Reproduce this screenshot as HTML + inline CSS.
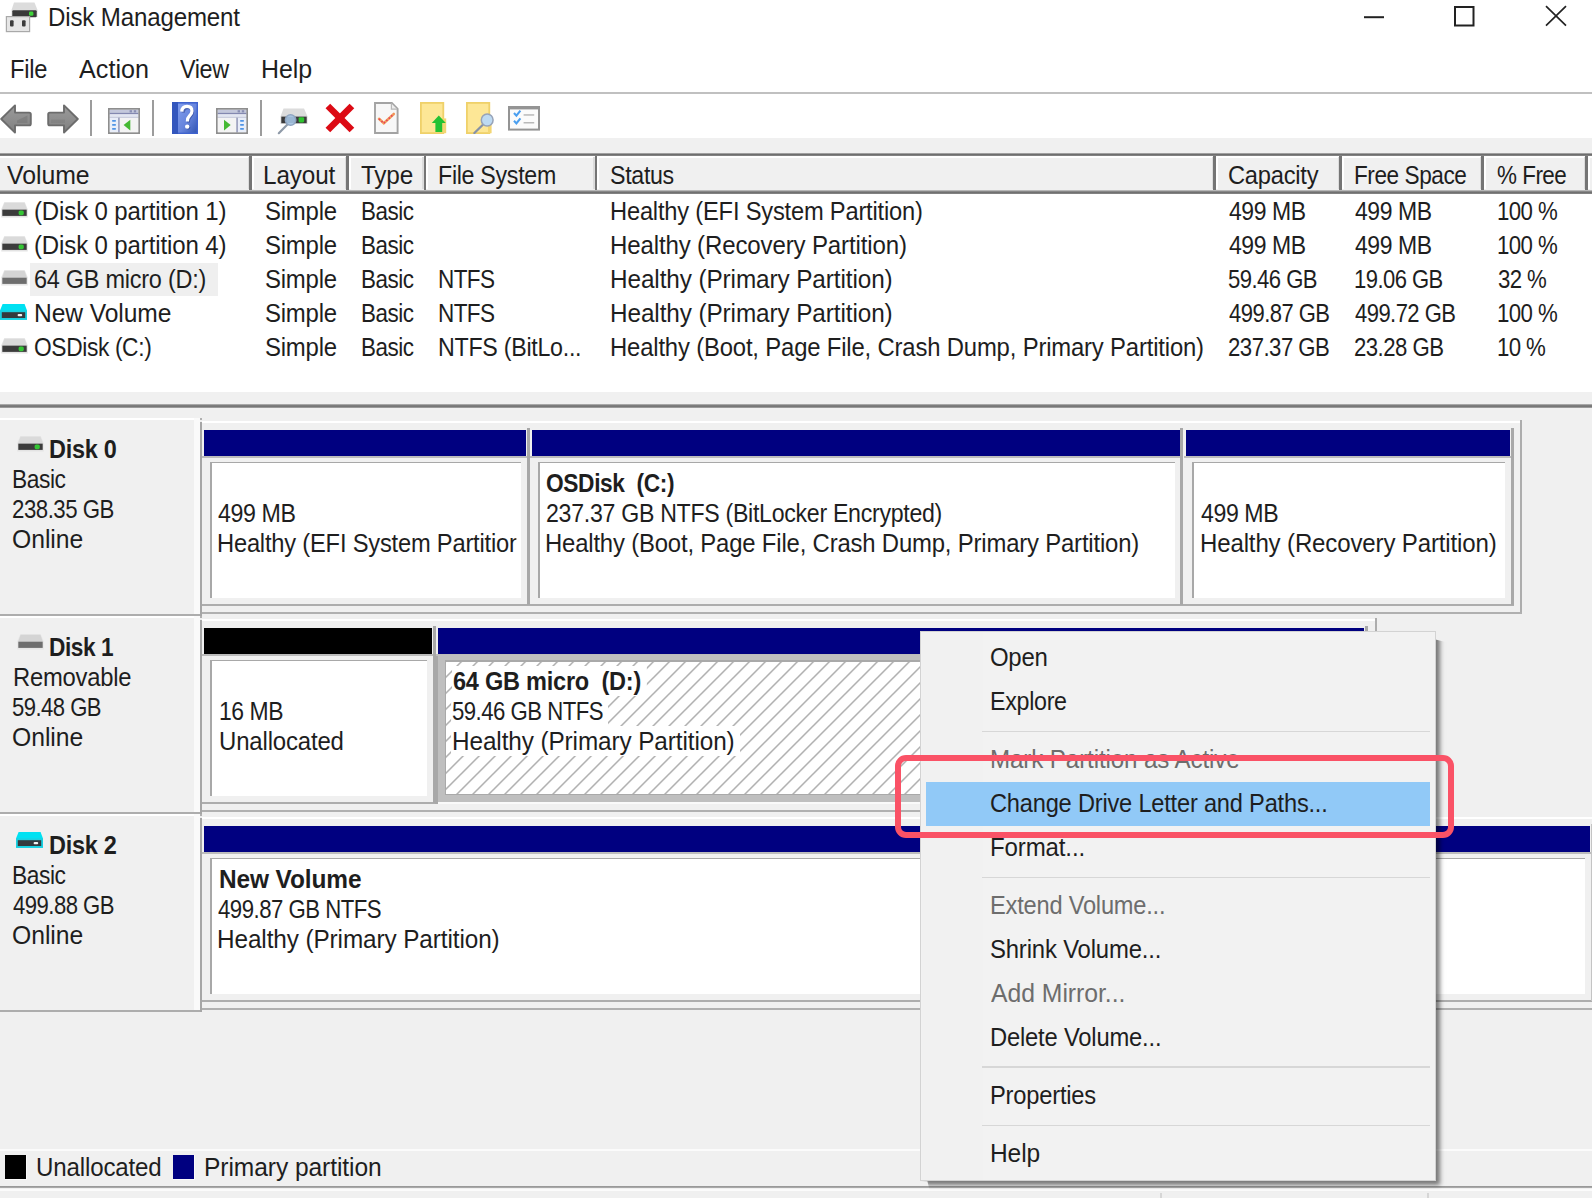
<!DOCTYPE html>
<html lang="en"><head><meta charset="utf-8"><title>Disk Management</title>
<style>
html,body{margin:0;padding:0}
body{width:1592px;height:1198px;overflow:hidden;background:#f0f0f0;position:relative;
 font-family:"Liberation Sans", sans-serif;font-size:25px;color:#1e1e1e;-webkit-font-smoothing:antialiased}
body>div,body>svg{position:absolute;display:block}
.t{white-space:nowrap;line-height:30px;height:30px;transform-origin:0 0}
</style></head>
<body>
<div style="left:0px;top:0px;width:1592px;height:138px;background:#fff;"></div>
<div style="left:0px;top:92px;width:1592px;height:2px;background:#c0c0c0;"></div>
<svg style="left:1355px;top:0;width:237px;height:36px" viewBox="1355 0 237 36"><path d="M1364 17.2H1384" stroke="#222" stroke-width="2" fill="none"/><rect x="1455" y="7" width="18.5" height="18.5" stroke="#222" stroke-width="2" fill="none"/><path d="M1546 6.2L1566 25.6M1566 6.2L1546 25.6" stroke="#222" stroke-width="1.7" fill="none"/></svg>
<div style="left:0px;top:153px;width:1592px;height:40px;background:#f0f0f0;"></div>
<div style="left:0px;top:152.5px;width:1592px;height:3px;background:linear-gradient(#b8b8b8,#6e6e6e 50%,#8a8a8a);"></div>
<div style="left:0px;top:155.5px;width:1592px;height:2px;background:#fff;"></div>
<div style="left:0px;top:189.5px;width:1592px;height:4.5px;background:linear-gradient(#d0d0d0,#8a8a8a 35%,#6e6e6e 65%,#8c8c8c);"></div>
<div style="left:247.5px;top:157px;width:1.5px;height:32px;background:#dcdcdc;"></div>
<div style="left:249px;top:156px;width:2.6px;height:34px;background:#757575;"></div>
<div style="left:251.6px;top:157px;width:2.4px;height:32px;background:#fff;"></div>
<div style="left:344.5px;top:157px;width:1.5px;height:32px;background:#dcdcdc;"></div>
<div style="left:346px;top:156px;width:2.6px;height:34px;background:#757575;"></div>
<div style="left:348.6px;top:157px;width:2.4px;height:32px;background:#fff;"></div>
<div style="left:422.0px;top:157px;width:1.5px;height:32px;background:#dcdcdc;"></div>
<div style="left:423.5px;top:156px;width:2.6px;height:34px;background:#757575;"></div>
<div style="left:426.1px;top:157px;width:2.4px;height:32px;background:#fff;"></div>
<div style="left:593.0px;top:157px;width:1.5px;height:32px;background:#dcdcdc;"></div>
<div style="left:594.5px;top:156px;width:2.6px;height:34px;background:#757575;"></div>
<div style="left:597.1px;top:157px;width:2.4px;height:32px;background:#fff;"></div>
<div style="left:1211.5px;top:157px;width:1.5px;height:32px;background:#dcdcdc;"></div>
<div style="left:1213px;top:156px;width:2.6px;height:34px;background:#757575;"></div>
<div style="left:1215.6px;top:157px;width:2.4px;height:32px;background:#fff;"></div>
<div style="left:1337.5px;top:157px;width:1.5px;height:32px;background:#dcdcdc;"></div>
<div style="left:1339px;top:156px;width:2.6px;height:34px;background:#757575;"></div>
<div style="left:1341.6px;top:157px;width:2.4px;height:32px;background:#fff;"></div>
<div style="left:1479.5px;top:157px;width:1.5px;height:32px;background:#dcdcdc;"></div>
<div style="left:1481px;top:156px;width:2.6px;height:34px;background:#757575;"></div>
<div style="left:1483.6px;top:157px;width:2.4px;height:32px;background:#fff;"></div>
<div style="left:1583.5px;top:157px;width:1.5px;height:32px;background:#dcdcdc;"></div>
<div style="left:1585px;top:156px;width:2.6px;height:34px;background:#757575;"></div>
<div style="left:1587.6px;top:157px;width:2.4px;height:32px;background:#fff;"></div>
<div style="left:0px;top:194px;width:1592px;height:198px;background:#fff;"></div>
<div style="left:30px;top:262.5px;width:187.5px;height:33.5px;background:#efefef;"></div>
<div style="left:0px;top:404px;width:1592px;height:3.5px;background:linear-gradient(#bdbdbd,#707070 45%,#7a7a7a 70%,#b0b0b0);"></div>
<div style="left:0px;top:418px;width:194px;height:2px;background:#fff;"></div>
<div style="left:194px;top:418px;width:6px;height:198px;background:#fafafa;"></div>
<div style="left:0px;top:614px;width:200px;height:2px;background:#adadad;"></div>
<div style="left:200px;top:418px;width:2px;height:2px;background:#b0b0b0;"></div>
<div style="left:200px;top:422px;width:2px;height:194px;background:#a6a6a6;"></div>
<div style="left:202px;top:421px;width:1318px;height:2.4px;background:#fff;"></div>
<div style="left:1520px;top:420px;width:2px;height:194px;background:#adadad;"></div>
<div style="left:202px;top:612px;width:1320px;height:2px;background:#b0b0b0;"></div>
<div style="left:202px;top:604px;width:1312px;height:2px;background:#adadad;"></div>
<div style="left:204px;top:430px;width:322px;height:25.8px;background:#000080;"></div>
<div style="left:526.5px;top:428px;width:3.4px;height:177px;background:#a8a8a8;"></div>
<div style="left:202px;top:456px;width:324.5px;height:1.8px;background:#bcbcbc;"></div>
<div style="left:210px;top:462px;width:311px;height:136px;background:#fff;border-top:1.8px solid #a8a8a8;border-left:2px solid #a8a8a8;box-sizing:border-box;"></div>
<div style="left:532px;top:430px;width:647.5px;height:25.8px;background:#000080;"></div>
<div style="left:1180.0px;top:428px;width:3.4px;height:177px;background:#a8a8a8;"></div>
<div style="left:530px;top:456px;width:650.0px;height:1.8px;background:#bcbcbc;"></div>
<div style="left:538px;top:462px;width:636.5px;height:136px;background:#fff;border-top:1.8px solid #a8a8a8;border-left:2px solid #a8a8a8;box-sizing:border-box;"></div>
<div style="left:1186px;top:430px;width:324px;height:25.8px;background:#000080;"></div>
<div style="left:1510.5px;top:428px;width:3.4px;height:177px;background:#a8a8a8;"></div>
<div style="left:1184px;top:456px;width:326.5px;height:1.8px;background:#bcbcbc;"></div>
<div style="left:1192px;top:462px;width:313px;height:136px;background:#fff;border-top:1.8px solid #a8a8a8;border-left:2px solid #a8a8a8;box-sizing:border-box;"></div>
<div style="left:0px;top:616px;width:194px;height:2px;background:#fff;"></div>
<div style="left:194px;top:616px;width:6px;height:198px;background:#fafafa;"></div>
<div style="left:0px;top:812px;width:200px;height:2px;background:#adadad;"></div>
<div style="left:200px;top:616px;width:2px;height:2px;background:#b0b0b0;"></div>
<div style="left:200px;top:620px;width:2px;height:194px;background:#a6a6a6;"></div>
<div style="left:202px;top:619px;width:1173px;height:2.4px;background:#fff;"></div>
<div style="left:1375px;top:618px;width:2px;height:194px;background:#adadad;"></div>
<div style="left:202px;top:810px;width:1175px;height:2px;background:#b0b0b0;"></div>
<div style="left:202px;top:802px;width:1167px;height:2px;background:#adadad;"></div>
<div style="left:204px;top:628px;width:228px;height:25.8px;background:#000;"></div>
<div style="left:432.5px;top:626px;width:3.4px;height:177px;background:#a8a8a8;"></div>
<div style="left:202px;top:654px;width:230.5px;height:1.8px;background:#bcbcbc;"></div>
<div style="left:210px;top:660px;width:217px;height:136px;background:#fff;border-top:1.8px solid #a8a8a8;border-left:2px solid #a8a8a8;box-sizing:border-box;"></div>
<div style="left:438.2px;top:628px;width:925.8px;height:25.8px;background:#000080;"></div>
<div style="left:1364.5px;top:626px;width:3.4px;height:177px;background:#a8a8a8;"></div>
<div style="left:436.2px;top:654px;width:928.3px;height:1.8px;background:#bcbcbc;"></div>
<div style="left:0px;top:814px;width:194px;height:2px;background:#fff;"></div>
<div style="left:194px;top:814px;width:6px;height:198px;background:#fafafa;"></div>
<div style="left:0px;top:1010px;width:200px;height:2px;background:#adadad;"></div>
<div style="left:200px;top:814px;width:2px;height:2px;background:#b0b0b0;"></div>
<div style="left:200px;top:818px;width:2px;height:194px;background:#a6a6a6;"></div>
<div style="left:202px;top:817px;width:1398px;height:2.4px;background:#fff;"></div>
<div style="left:202px;top:1008px;width:1398px;height:2px;background:#b0b0b0;"></div>
<div style="left:202px;top:1000px;width:1398px;height:2px;background:#adadad;"></div>
<div style="left:204px;top:826px;width:1386px;height:25.8px;background:#000080;"></div>
<div style="left:1590.5px;top:824px;width:3.4px;height:177px;background:#c4c4c4;"></div>
<div style="left:202px;top:852px;width:1388.5px;height:1.8px;background:#bcbcbc;"></div>
<div style="left:210px;top:858px;width:1375px;height:136px;background:#fff;border-top:1.8px solid #a8a8a8;border-left:2px solid #a8a8a8;box-sizing:border-box;"></div>
<div style="left:434.7px;top:655.7px;width:3px;height:148px;background:#a8a8a8;"></div>
<div style="left:437.7px;top:654.5px;width:931px;height:147.1px;background:#bfbfbf;"></div>
<div style="left:437.7px;top:801.6px;width:931px;height:2.6px;background:#fafafa;"></div>
<div style="left:444.7px;top:660.4px;width:920px;height:134.6px;background:#a9a9a9;"></div>
<svg style="left:445.7px;top:661.6px;width:917px;height:132.2px" width="917" height="132.2"><defs><pattern id="hp" width="16" height="16" patternUnits="userSpaceOnUse" x="15.1" y="0"><rect width="16" height="16" fill="#fff"/><path d="M-2 18L18 -2M-18 18L2 -2M14 18L34 -2" stroke="#adadad" stroke-width="1.5" fill="none"/></pattern></defs><rect width="917" height="132.2" fill="url(#hp)"/></svg>
<div style="left:0px;top:1148.5px;width:1592px;height:2px;background:#fbfbfb;"></div>
<div style="left:4.5px;top:1154.5px;width:22.5px;height:25.5px;background:#fafafa;"></div>
<div style="left:5.3px;top:1155.3px;width:21px;height:24px;background:#000;"></div>
<div style="left:172.6px;top:1154.5px;width:22.5px;height:25.5px;background:#fafafa;"></div>
<div style="left:173.4px;top:1155.3px;width:20.8px;height:24px;background:#000080;"></div>
<div style="left:0px;top:1186.2px;width:1592px;height:2.3px;background:linear-gradient(#929292,#b0b0b0);"></div>
<div style="left:0px;top:1188.5px;width:1592px;height:2px;background:#fbfbfb;"></div>
<div style="left:1160px;top:1193px;width:1.5px;height:5px;background:#d6d6d6;"></div>
<div style="left:1427px;top:1193px;width:1.5px;height:5px;background:#d6d6d6;"></div>
<div style="left:920.4px;top:630.6px;width:515.2px;height:550.6px;box-shadow:4.5px 4.5px 4.5px -0.5px rgba(0,0,0,.5);z-index:19;clip-path:polygon(0 0,515.2px 0,515.2px 9px,527.2px 12px,527.2px 562.6px,10px 562.6px,7px 550.6px,0 550.6px)"></div>
<div style="left:920.4px;top:630.6px;width:515.2px;height:550.6px;background:#f2f2f2;border:1.4px solid #d3d3d3;box-sizing:border-box;z-index:20"></div>
<div style="left:922px;top:632.2px;width:60.5px;height:547.5px;background:#f1f1f1;z-index:21;"></div>
<div style="left:926px;top:782px;width:504px;height:44px;background:#91c9f7;z-index:21;"></div>
<div style="left:982px;top:730.5px;width:448px;height:1.5px;background:#d7d7d7;z-index:21;"></div>
<div style="left:982px;top:876.5px;width:448px;height:1.5px;background:#d7d7d7;z-index:21;"></div>
<div style="left:982px;top:1066px;width:448px;height:1.5px;background:#d7d7d7;z-index:21;"></div>
<div style="left:982px;top:1124.5px;width:448px;height:1.5px;background:#d7d7d7;z-index:21;"></div>
<div style="left:895px;top:755px;width:559px;height:83px;border:6px solid #fa5266;border-radius:11px;box-sizing:border-box;z-index:40"></div>
<svg style="left:0.7px;top:201.6px;width:27px;height:16px;" viewBox="0 0 27 16"><path d="M3.2 0.3H23.8L26.7 7.2V15.6H0.3V7.2Z" fill="#e3e3e3"/><path d="M3.6 0.8H23.4L25.6 7H1.4Z" fill="#dadada"/><rect x="1.3" y="7.6" width="24.4" height="6.3" fill="#3c3c3c"/><rect x="17.6" y="8.4" width="5.2" height="4.8" rx="1.6" fill="#35c635"/></svg>
<svg style="left:0.7px;top:235.6px;width:27px;height:16px;" viewBox="0 0 27 16"><path d="M3.2 0.3H23.8L26.7 7.2V15.6H0.3V7.2Z" fill="#e3e3e3"/><path d="M3.6 0.8H23.4L25.6 7H1.4Z" fill="#dadada"/><rect x="1.3" y="7.6" width="24.4" height="6.3" fill="#3c3c3c"/><rect x="17.6" y="8.4" width="5.2" height="4.8" rx="1.6" fill="#35c635"/></svg>
<svg style="left:0.7px;top:269.6px;width:27px;height:16px;" viewBox="0 0 27 16"><path d="M3.2 0.3H23.8L26.7 7.2V15.6H0.3V7.2Z" fill="#e6e6e6"/><path d="M3.6 0.8H23.4L25.6 7H1.4Z" fill="#d4d4d4"/><rect x="1.3" y="7.6" width="24.4" height="6.3" fill="#6e6e6e"/></svg>
<svg style="left:0.3px;top:303.8px;width:27px;height:16px;" viewBox="0 0 27 16"><path d="M2.6 0H24.6L27 6.4V15.8H0V6.4Z" fill="#00e1f2"/><rect x="0" y="6.4" width="27" height="9.4" fill="#19cfe0"/><rect x="1.8" y="8.2" width="23.4" height="5.8" fill="#35393d"/><rect x="17.6" y="9.9" width="4.6" height="2.4" rx="1" fill="#f4f4f4"/></svg>
<svg style="left:0.7px;top:337.6px;width:27px;height:16px;" viewBox="0 0 27 16"><path d="M3.2 0.3H23.8L26.7 7.2V15.6H0.3V7.2Z" fill="#e3e3e3"/><path d="M3.6 0.8H23.4L25.6 7H1.4Z" fill="#dadada"/><rect x="1.3" y="7.6" width="24.4" height="6.3" fill="#3c3c3c"/><rect x="17.6" y="8.4" width="5.2" height="4.8" rx="1.6" fill="#35c635"/></svg>
<svg style="left:16.6px;top:435.8px;width:27px;height:16px;" viewBox="0 0 27 16"><path d="M3.2 0.3H23.8L26.7 7.2V15.6H0.3V7.2Z" fill="#e3e3e3"/><path d="M3.6 0.8H23.4L25.6 7H1.4Z" fill="#dadada"/><rect x="1.3" y="7.6" width="24.4" height="6.3" fill="#3c3c3c"/><rect x="17.6" y="8.4" width="5.2" height="4.8" rx="1.6" fill="#35c635"/></svg>
<svg style="left:16.6px;top:633.8px;width:27px;height:16px;" viewBox="0 0 27 16"><path d="M3.2 0.3H23.8L26.7 7.2V15.6H0.3V7.2Z" fill="#e6e6e6"/><path d="M3.6 0.8H23.4L25.6 7H1.4Z" fill="#d4d4d4"/><rect x="1.3" y="7.6" width="24.4" height="6.3" fill="#6e6e6e"/></svg>
<svg style="left:16.4px;top:831.8px;width:27px;height:16px;" viewBox="0 0 27 16"><path d="M2.6 0H24.6L27 6.4V15.8H0V6.4Z" fill="#00e1f2"/><rect x="0" y="6.4" width="27" height="9.4" fill="#19cfe0"/><rect x="1.8" y="8.2" width="23.4" height="5.8" fill="#35393d"/><rect x="17.6" y="9.9" width="4.6" height="2.4" rx="1" fill="#f4f4f4"/></svg>
<svg style="left:5px;top:1px;width:34px;height:33px;" viewBox="0 0 34 33"><path d="M9 1.5H29.5L32.5 9V16H6.5V9Z" fill="#dcdcdc"/><rect x="7.3" y="9.3" width="24.4" height="7" rx="1" fill="#3a3a3a"/><rect x="24" y="10.6" width="4.4" height="4.2" rx="1.4" fill="#3fd43a"/><rect x="1.4" y="15.6" width="23.2" height="15" fill="#e6e6e6" stroke="#a9a9a9" stroke-width="1.2"/><rect x="5" y="19.2" width="3.6" height="6.2" rx="1" fill="#3c3c3c"/><rect x="17" y="19.2" width="3.6" height="6.2" rx="1" fill="#3c3c3c"/></svg>
<svg style="left:0px;top:103px;width:33px;height:32px;" viewBox="0 0 33 32"><defs><linearGradient id="ag" x1="0" y1="0" x2="0" y2="1"><stop offset="0" stop-color="#9a9a9a"/><stop offset=".5" stop-color="#8e8e8e"/><stop offset="1" stop-color="#7f7f7f"/></linearGradient></defs><path d="M1.2 16L15 2.4V9.6H29.2Q30.8 9.6 30.8 11.2V20.8Q30.8 22.4 29.2 22.4H15V29.6Z" fill="url(#ag)" stroke="#6c6c6c" stroke-width="1.9" stroke-linejoin="round"/><path d="M17 17.5L27.5 12.5V20H17Z" fill="#6f6f6f" fill-opacity=".45"/></svg>
<svg style="left:45.5px;top:103px;width:33px;height:32px;" viewBox="0 0 33 32"><path d="M31.8 16L18 2.4V9.6H3.8Q2.2 9.6 2.2 11.2V20.8Q2.2 22.4 3.8 22.4H18V29.6Z" fill="url(#ag)" stroke="#6c6c6c" stroke-width="1.9" stroke-linejoin="round"/><path d="M5 16.5H19V20H5Z" fill="#6f6f6f" fill-opacity=".3"/></svg>
<div style="left:90px;top:99.8px;width:2px;height:36px;background:#9c9c9c;"></div>
<div style="left:152.4px;top:99.8px;width:2px;height:36px;background:#9c9c9c;"></div>
<div style="left:260px;top:99.8px;width:2px;height:36px;background:#9c9c9c;"></div>
<svg style="left:108px;top:108px;width:32px;height:26px;" viewBox="0 0 32 26"><rect x="0.9" y="0.9" width="30.2" height="24.2" fill="#fff" stroke="#8e8e8e" stroke-width="1.8"/><rect x="1.8" y="1.8" width="28.4" height="2.9" fill="#c4c8dc"/><rect x="21.6" y="2.2" width="2.4" height="2.2" fill="#8a90b4"/><rect x="25.8" y="2.2" width="2.4" height="2.2" fill="#8a90b4"/><rect x="1.8" y="4.7" width="28.4" height="1.7" fill="#8388b0"/><rect x="1.8" y="6.4" width="28.4" height="2.4" fill="#e3e6f2"/><rect x="1.8" y="8.8" width="28.4" height="1" fill="#b4b8d0"/><rect x="1.8" y="9.8" width="8.4" height="14.4" fill="#e9eef9"/><rect x="10.2" y="9.8" width="1.6" height="14.4" fill="#8a90b4"/><rect x="11.8" y="9.8" width="18.4" height="14.4" fill="#f4f4f4"/><rect x="4" y="12" width="4" height="1.8" rx=".8" fill="#4f94e6"/><rect x="4" y="16" width="4" height="1.8" rx=".8" fill="#4f94e6"/><rect x="4" y="20" width="4" height="1.8" rx=".8" fill="#4f94e6"/><path d="M22.3 11.8V22.4L15.6 17.1Z" fill="#45b933"/></svg>
<svg style="left:216px;top:108px;width:32px;height:26px;" viewBox="0 0 32 26"><rect x="0.9" y="0.9" width="30.2" height="24.2" fill="#fff" stroke="#8e8e8e" stroke-width="1.8"/><rect x="1.8" y="1.8" width="28.4" height="2.9" fill="#c4c8dc"/><rect x="21.6" y="2.2" width="2.4" height="2.2" fill="#8a90b4"/><rect x="25.8" y="2.2" width="2.4" height="2.2" fill="#8a90b4"/><rect x="1.8" y="4.7" width="28.4" height="1.7" fill="#8388b0"/><rect x="1.8" y="6.4" width="28.4" height="2.4" fill="#e3e6f2"/><rect x="1.8" y="8.8" width="28.4" height="1" fill="#b4b8d0"/><rect x="21.8" y="9.8" width="8.4" height="14.4" fill="#e9eef9"/><rect x="20.2" y="9.8" width="1.6" height="14.4" fill="#8a90b4"/><rect x="1.8" y="9.8" width="18.4" height="14.4" fill="#f4f4f4"/><rect x="24" y="12" width="4" height="1.8" rx=".8" fill="#4f94e6"/><rect x="24" y="16" width="4" height="1.8" rx=".8" fill="#4f94e6"/><rect x="24" y="20" width="4" height="1.8" rx=".8" fill="#4f94e6"/><path d="M8 11.8V22.4L14.7 17.1Z" fill="#45b933"/></svg>
<svg style="left:172px;top:101.8px;width:26px;height:32px;" viewBox="0 0 26 32"><defs><linearGradient id="hb" x1="0" y1="0" x2="1" y2="1"><stop offset="0" stop-color="#7f9cec"/><stop offset=".55" stop-color="#6684dc"/><stop offset="1" stop-color="#3457b4"/></linearGradient></defs><rect x="0" y="0" width="26" height="32" fill="#3f63cf"/><rect x="0" y="0" width="6" height="32" fill="#3356bd"/><rect x="6" y="1.6" width="18.6" height="29" fill="url(#hb)"/><path d="M11.2 10.6Q11.4 5.6 16 5.6Q20.6 5.6 20.6 10Q20.6 12.8 18 15.2Q16.4 16.8 16.4 20.4" fill="none" stroke="#2c3f8c" stroke-opacity=".55" stroke-width="3.1"/><circle cx="16.2" cy="25.6" r="2.1" fill="#2c3f8c" fill-opacity=".55"/><path d="M9.8 9.6Q10 4.4 15 4.4Q20 4.4 20 9Q20 11.8 17.2 14.2Q15.4 15.8 15.4 19.4" fill="none" stroke="#fff" stroke-width="3.2"/><circle cx="15.2" cy="24.6" r="2.2" fill="#fff"/></svg>
<svg style="left:277px;top:107px;width:32px;height:28px;" viewBox="0 0 32 28"><path d="M6.5 1.5H27L30.5 9.5V17H3.5V9.5Z" fill="#dcdcdc"/><rect x="4.3" y="9.6" width="25.4" height="6.6" fill="#3b3b3b"/><rect x="21.6" y="10.2" width="5.6" height="5.2" rx="1.4" fill="#2fc42f"/><path d="M10.4 17.4L1.8 26.2" stroke="#8f9aa8" stroke-width="2.2" stroke-linecap="round"/><circle cx="13.6" cy="13" r="5.2" fill="#a9c8e8" fill-opacity=".88" stroke="#8ea4c0" stroke-width="1.5"/></svg>
<svg style="left:325px;top:103px;width:30px;height:30px;" viewBox="0 0 30 30"><g transform="translate(14.9 15)" fill="#dc0a14"><rect x="-3.3" y="-17" width="6.6" height="34" transform="rotate(45)"/><rect x="-3.3" y="-17" width="6.6" height="34" transform="rotate(-45)"/></g></svg>
<svg style="left:374px;top:102px;width:25px;height:32px;" viewBox="0 0 25 32"><path d="M1 1H17.8L23.6 6.8V31H1Z" fill="#f7f7f7" stroke="#a3a3a3" stroke-width="1.9"/><path d="M17.4 1.4V7.2H23.2" fill="#ededed" stroke="#b8b8b8" stroke-width="1.2"/><path d="M5 16.8L9.8 21.2L19.8 12" fill="none" stroke="#f2a05c" stroke-width="2.6" stroke-linecap="round"/><path d="M5 16.8L9.8 21.2L19.8 12" fill="none" stroke="#e8405c" stroke-width="1.7" stroke-dasharray="1.6 1.7"/></svg>
<svg style="left:420px;top:102px;width:27px;height:32px;" viewBox="0 0 27 32"><rect x="0.9" y="0.9" width="22.4" height="30.2" fill="#fde796" stroke="#efd16a" stroke-width="1.8"/><rect x="22" y="16.4" width="4.2" height="14.8" fill="#f3d673"/><path d="M18.8 13.4L25.8 21H22.2V30H15.4V21H11.8Z" fill="#24c233"/></svg>
<svg style="left:466px;top:102px;width:29px;height:32px;" viewBox="0 0 29 32"><rect x="0.9" y="0.9" width="22.4" height="30.2" fill="#fde796" stroke="#efd16a" stroke-width="1.8"/><rect x="22" y="20" width="3.6" height="11.2" fill="#f3d673"/><path d="M16.6 23L8.4 31" stroke="#8792a6" stroke-width="2.3" stroke-linecap="round"/><circle cx="21.2" cy="18" r="5.9" fill="#bddaf2" stroke="#97a3b8" stroke-width="1.5"/></svg>
<svg style="left:508px;top:106px;width:32px;height:25px;" viewBox="0 0 32 25"><rect x="1" y="1" width="30" height="22.6" fill="#fbfbfb" stroke="#949494" stroke-width="2"/><rect x="1" y="0" width="30" height="3.4" fill="#949494"/><path d="M6 7L8.4 9.6L12.4 4.6" fill="none" stroke="#4a9ff0" stroke-width="2.1"/><path d="M6 14.8L8.4 17.4L12.4 12.4" fill="none" stroke="#4a9ff0" stroke-width="2.1"/><rect x="15.6" y="8.2" width="10.6" height="1.5" fill="#b9b9b9"/><rect x="15.6" y="16" width="10.6" height="1.5" fill="#b9b9b9"/></svg>
<div class="t" style="left:47.97px;top:2px;letter-spacing:-0.171px;transform:scaleX(0.9643);">Disk Management</div>
<div class="t" style="left:10.00px;top:54px;letter-spacing:-0.221px;transform:scaleX(0.9478);">File</div>
<div class="t" style="left:78.80px;top:54px;letter-spacing:0.026px;transform:scaleX(1.0057);">Action</div>
<div class="t" style="left:180.20px;top:54px;letter-spacing:-0.403px;transform:scaleX(0.9351);">View</div>
<div class="t" style="left:261.41px;top:54px;letter-spacing:-0.018px;transform:scaleX(0.9967);">Help</div>
<div class="t" style="left:6.50px;top:160px;letter-spacing:-0.039px;transform:scaleX(0.9929);">Volume</div>
<div class="t" style="left:263.46px;top:160px;letter-spacing:-0.138px;transform:scaleX(0.9720);">Layout</div>
<div class="t" style="left:361.10px;top:160px;letter-spacing:-0.160px;transform:scaleX(0.9732);">Type</div>
<div class="t" style="left:438.04px;top:160px;letter-spacing:-0.315px;transform:scaleX(0.9278);">File System</div>
<div class="t" style="left:609.87px;top:160px;letter-spacing:-0.341px;transform:scaleX(0.9281);">Status</div>
<div class="t" style="left:1228.25px;top:160px;letter-spacing:-0.248px;transform:scaleX(0.9471);">Capacity</div>
<div class="t" style="left:1354.09px;top:160px;letter-spacing:-0.468px;transform:scaleX(0.9032);">Free Space</div>
<div class="t" style="left:1497.20px;top:160px;letter-spacing:-0.563px;transform:scaleX(0.8977);">% Free</div>
<div class="t" style="left:33.94px;top:196px;letter-spacing:-0.138px;transform:scaleX(0.9611);">(Disk 0 partition 1)</div>
<div class="t" style="left:264.54px;top:196px;letter-spacing:-0.215px;transform:scaleX(0.9573);">Simple</div>
<div class="t" style="left:360.81px;top:196px;letter-spacing:-0.523px;transform:scaleX(0.8967);">Basic</div>
<div class="t" style="left:609.61px;top:196px;letter-spacing:-0.205px;transform:scaleX(0.9473);">Healthy (EFI System Partition)</div>
<div class="t" style="left:1228.80px;top:196px;letter-spacing:-0.473px;transform:scaleX(0.9192);">499 MB</div>
<div class="t" style="left:1354.50px;top:196px;letter-spacing:-0.473px;transform:scaleX(0.9192);">499 MB</div>
<div class="t" style="left:1497.31px;top:196px;letter-spacing:-0.666px;transform:scaleX(0.8896);">100 %</div>
<div class="t" style="left:33.94px;top:230px;letter-spacing:-0.138px;transform:scaleX(0.9611);">(Disk 0 partition 4)</div>
<div class="t" style="left:264.54px;top:230px;letter-spacing:-0.215px;transform:scaleX(0.9573);">Simple</div>
<div class="t" style="left:360.81px;top:230px;letter-spacing:-0.523px;transform:scaleX(0.8967);">Basic</div>
<div class="t" style="left:609.58px;top:230px;letter-spacing:-0.147px;transform:scaleX(0.9620);">Healthy (Recovery Partition)</div>
<div class="t" style="left:1228.80px;top:230px;letter-spacing:-0.473px;transform:scaleX(0.9192);">499 MB</div>
<div class="t" style="left:1354.50px;top:230px;letter-spacing:-0.473px;transform:scaleX(0.9192);">499 MB</div>
<div class="t" style="left:1497.31px;top:230px;letter-spacing:-0.666px;transform:scaleX(0.8896);">100 %</div>
<div class="t" style="left:33.96px;top:264px;letter-spacing:-0.260px;transform:scaleX(0.9382);">64 GB micro (D:)</div>
<div class="t" style="left:264.54px;top:264px;letter-spacing:-0.215px;transform:scaleX(0.9573);">Simple</div>
<div class="t" style="left:360.81px;top:264px;letter-spacing:-0.523px;transform:scaleX(0.8967);">Basic</div>
<div class="t" style="left:438.10px;top:264px;letter-spacing:-0.710px;transform:scaleX(0.9013);">NTFS</div>
<div class="t" style="left:609.55px;top:264px;letter-spacing:-0.101px;transform:scaleX(0.9730);">Healthy (Primary Partition)</div>
<div class="t" style="left:1227.92px;top:264px;letter-spacing:-0.606px;transform:scaleX(0.8825);">59.46 GB</div>
<div class="t" style="left:1354.32px;top:264px;letter-spacing:-0.614px;transform:scaleX(0.8810);">19.06 GB</div>
<div class="t" style="left:1497.50px;top:264px;letter-spacing:-0.729px;transform:scaleX(0.8888);">32 %</div>
<div class="t" style="left:34.13px;top:298px;letter-spacing:-0.082px;transform:scaleX(0.9839);">New Volume</div>
<div class="t" style="left:264.54px;top:298px;letter-spacing:-0.215px;transform:scaleX(0.9573);">Simple</div>
<div class="t" style="left:360.81px;top:298px;letter-spacing:-0.523px;transform:scaleX(0.8967);">Basic</div>
<div class="t" style="left:438.10px;top:298px;letter-spacing:-0.710px;transform:scaleX(0.9013);">NTFS</div>
<div class="t" style="left:609.55px;top:298px;letter-spacing:-0.101px;transform:scaleX(0.9730);">Healthy (Primary Partition)</div>
<div class="t" style="left:1228.80px;top:298px;letter-spacing:-0.614px;transform:scaleX(0.8811);">499.87 GB</div>
<div class="t" style="left:1354.50px;top:298px;letter-spacing:-0.617px;transform:scaleX(0.8805);">499.72 GB</div>
<div class="t" style="left:1497.31px;top:298px;letter-spacing:-0.666px;transform:scaleX(0.8896);">100 %</div>
<div class="t" style="left:34.49px;top:332px;letter-spacing:-0.403px;transform:scaleX(0.9105);">OSDisk (C:)</div>
<div class="t" style="left:264.54px;top:332px;letter-spacing:-0.215px;transform:scaleX(0.9573);">Simple</div>
<div class="t" style="left:360.81px;top:332px;letter-spacing:-0.523px;transform:scaleX(0.8967);">Basic</div>
<div class="t" style="left:438.04px;top:332px;letter-spacing:-0.290px;transform:scaleX(0.9286);">NTFS (BitLo...</div>
<div class="t" style="left:609.59px;top:332px;letter-spacing:-0.177px;transform:scaleX(0.9544);">Healthy (Boot, Page File, Crash Dump, Primary Partition)</div>
<div class="t" style="left:1227.91px;top:332px;letter-spacing:-0.579px;transform:scaleX(0.8867);">237.37 GB</div>
<div class="t" style="left:1353.61px;top:332px;letter-spacing:-0.586px;transform:scaleX(0.8863);">23.28 GB</div>
<div class="t" style="left:1497.31px;top:332px;letter-spacing:-0.702px;transform:scaleX(0.8910);">10 %</div>
<div class="t" style="left:48.96px;top:434px;letter-spacing:-0.302px;transform:scaleX(0.9382);font-weight:bold;">Disk 0</div>
<div class="t" style="left:11.98px;top:464px;letter-spacing:-0.454px;transform:scaleX(0.9099);">Basic</div>
<div class="t" style="left:12.11px;top:494px;letter-spacing:-0.561px;transform:scaleX(0.8900);">238.35 GB</div>
<div class="t" style="left:12.11px;top:524px;letter-spacing:-0.048px;transform:scaleX(0.9897);">Online</div>
<div class="t" style="left:48.99px;top:632px;letter-spacing:-0.464px;transform:scaleX(0.9073);font-weight:bold;">Disk 1</div>
<div class="t" style="left:12.60px;top:662px;letter-spacing:-0.251px;transform:scaleX(0.9520);">Removable</div>
<div class="t" style="left:12.12px;top:692px;letter-spacing:-0.602px;transform:scaleX(0.8833);">59.48 GB</div>
<div class="t" style="left:12.11px;top:722px;letter-spacing:-0.048px;transform:scaleX(0.9897);">Online</div>
<div class="t" style="left:48.96px;top:830px;letter-spacing:-0.302px;transform:scaleX(0.9382);font-weight:bold;">Disk 2</div>
<div class="t" style="left:11.98px;top:860px;letter-spacing:-0.454px;transform:scaleX(0.9099);">Basic</div>
<div class="t" style="left:13.00px;top:890px;letter-spacing:-0.596px;transform:scaleX(0.8844);">499.88 GB</div>
<div class="t" style="left:12.11px;top:920px;letter-spacing:-0.048px;transform:scaleX(0.9897);">Online</div>
<div class="t" style="left:217.90px;top:498px;letter-spacing:-0.425px;transform:scaleX(0.9273);">499 MB</div>
<div class="t" style="left:217.21px;top:528px;letter-spacing:-0.205px;transform:scaleX(0.9473);width:315.94px;overflow:hidden;">Healthy (EFI System Partition)</div>
<div class="t" style="left:545.79px;top:468px;letter-spacing:-0.410px;transform:scaleX(0.9092);font-weight:bold;">OSDisk &nbsp;(C:)</div>
<div class="t" style="left:545.77px;top:498px;letter-spacing:-0.316px;transform:scaleX(0.9258);">237.37 GB NTFS (BitLocker Encrypted)</div>
<div class="t" style="left:545.49px;top:528px;letter-spacing:-0.176px;transform:scaleX(0.9546);">Healthy (Boot, Page File, Crash Dump, Primary Partition)</div>
<div class="t" style="left:1200.80px;top:498px;letter-spacing:-0.441px;transform:scaleX(0.9246);">499 MB</div>
<div class="t" style="left:1199.78px;top:528px;letter-spacing:-0.149px;transform:scaleX(0.9615);">Healthy (Recovery Partition)</div>
<div class="t" style="left:218.98px;top:696px;letter-spacing:-0.501px;transform:scaleX(0.9172);">16 MB</div>
<div class="t" style="left:218.94px;top:726px;letter-spacing:-0.179px;transform:scaleX(0.9592);">Unallocated</div>
<div class="t" style="left:453.20px;top:666px;letter-spacing:-0.256px;transform:scaleX(0.9410);font-weight:bold;"><span style="background:#fff;display:inline-block;height:30px;margin-left:-1px;padding-left:1px;padding-right:6px">64 GB micro &nbsp;(D:)</span></div>
<div class="t" style="left:452.31px;top:696px;letter-spacing:-0.579px;transform:scaleX(0.8864);"><span style="background:#fff;display:inline-block;height:30px;margin-left:-1px;padding-left:1px;padding-right:6px">59.46 GB NTFS</span></div>
<div class="t" style="left:452.15px;top:726px;letter-spacing:-0.101px;transform:scaleX(0.9730);"><span style="background:#fff;display:inline-block;height:30px;margin-left:-1px;padding-left:1px;padding-right:6px">Healthy (Primary Partition)</span></div>
<div class="t" style="left:218.62px;top:864px;letter-spacing:-0.120px;transform:scaleX(0.9779);font-weight:bold;">New Volume</div>
<div class="t" style="left:218.20px;top:894px;letter-spacing:-0.572px;transform:scaleX(0.8876);">499.87 GB NTFS</div>
<div class="t" style="left:217.15px;top:924px;letter-spacing:-0.101px;transform:scaleX(0.9730);">Healthy (Primary Partition)</div>
<div class="t" style="left:36.34px;top:1152px;letter-spacing:-0.159px;transform:scaleX(0.9639);">Unallocated</div>
<div class="t" style="left:203.94px;top:1152px;letter-spacing:-0.066px;transform:scaleX(0.9824);">Primary partition</div>
<div class="t" style="left:990.24px;top:642px;letter-spacing:-0.277px;transform:scaleX(0.9585);z-index:30;">Open</div>
<div class="t" style="left:990.04px;top:686px;letter-spacing:-0.327px;transform:scaleX(0.9299);z-index:30;">Explore</div>
<div class="t" style="left:989.97px;top:744px;letter-spacing:-0.126px;transform:scaleX(0.9669);color:#6d6d6d;z-index:30;">Mark Partition as Active</div>
<div class="t" style="left:990.25px;top:788px;letter-spacing:-0.217px;transform:scaleX(0.9452);z-index:30;">Change Drive Letter and Paths...</div>
<div class="t" style="left:989.97px;top:832px;letter-spacing:-0.152px;transform:scaleX(0.9626);z-index:30;">Format...</div>
<div class="t" style="left:990.01px;top:890px;letter-spacing:-0.227px;transform:scaleX(0.9458);color:#6d6d6d;z-index:30;">Extend Volume...</div>
<div class="t" style="left:990.24px;top:934px;letter-spacing:-0.180px;transform:scaleX(0.9553);z-index:30;">Shrink Volume...</div>
<div class="t" style="left:991.20px;top:978px;letter-spacing:-0.036px;transform:scaleX(0.9905);color:#6d6d6d;z-index:30;">Add Mirror...</div>
<div class="t" style="left:990.00px;top:1022px;letter-spacing:-0.200px;transform:scaleX(0.9507);z-index:30;">Delete Volume...</div>
<div class="t" style="left:990.00px;top:1080px;letter-spacing:-0.218px;transform:scaleX(0.9481);z-index:30;">Properties</div>
<div class="t" style="left:989.94px;top:1138px;letter-spacing:-0.102px;transform:scaleX(0.9812);z-index:30;">Help</div>
</body></html>
